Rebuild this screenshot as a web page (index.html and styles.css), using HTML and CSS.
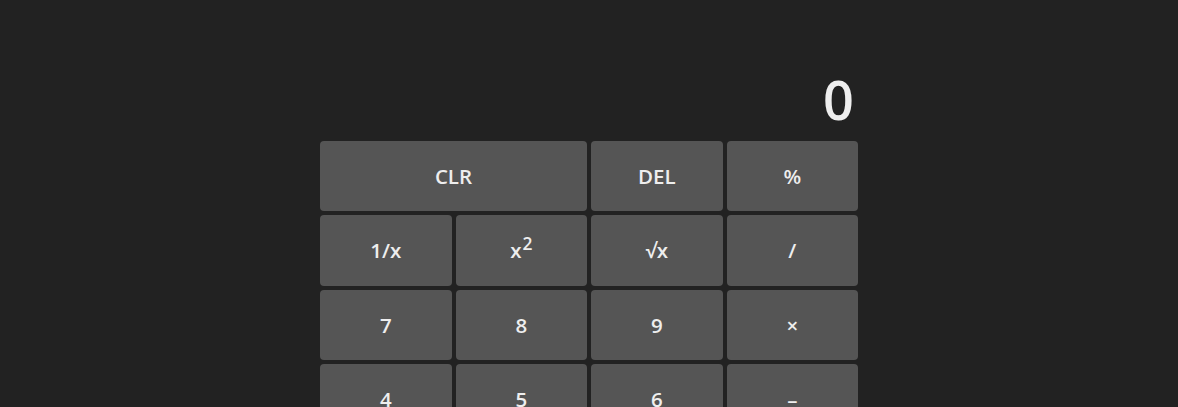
FILE: index.html
```html
<!DOCTYPE html>
<html lang="en">
<head>
<meta charset="utf-8">
<title>Calculator</title>
<link rel="stylesheet" href="styles.css">
</head>
<body>
<main class="calculator">
  <div class="display">0</div>
  <div class="keys">
    <button class="key span-2">CLR</button>
    <button class="key">DEL</button>
    <button class="key">%</button>
    <button class="key">1/x</button>
    <button class="key">x<sup>2</sup></button>
    <button class="key">√x</button>
    <button class="key">/</button>
    <button class="key">7</button>
    <button class="key">8</button>
    <button class="key">9</button>
    <button class="key">×</button>
    <button class="key">4</button>
    <button class="key">5</button>
    <button class="key">6</button>
    <button class="key">–</button>
    <button class="key">1</button>
    <button class="key">2</button>
    <button class="key">3</button>
    <button class="key">+</button>
    <button class="key">±</button>
    <button class="key">0</button>
    <button class="key">.</button>
    <button class="key">=</button>
  </div>
</main>
</body>
</html>
```
FILE: styles.css
```css
html, body {
  margin: 0;
  padding: 0;
  background: #222222;
  font-family: "Open Sans", "Noto Sans", sans-serif;
  color: #eeeeee;
}

.calculator {
  width: 538px;
  margin: 0 auto;
  padding-top: 66px;
}

.display {
  text-align: right;
  font-size: 54px;
  font-weight: 600;
  line-height: 70px;
  height: 77px;
  padding-right: 4px;
  color: #eeeeee;
  margin-top: -2px;
}

.keys {
  display: grid;
  grid-template-columns: repeat(4, 1fr);
  grid-auto-rows: 70.33px;
  gap: 4px;
}

.key {
  background: #555555;
  color: #eeeeee;
  border: none;
  border-radius: 4px;
  font-family: inherit;
  font-size: 20.5px;
  font-weight: 600;
  padding: 0;
}

.key sup {
  font-size: 0.85em;
  line-height: 0;
  vertical-align: 0.5em;
  margin-left: 1px;
}

.span-2 {
  grid-column: span 2;
}
```
